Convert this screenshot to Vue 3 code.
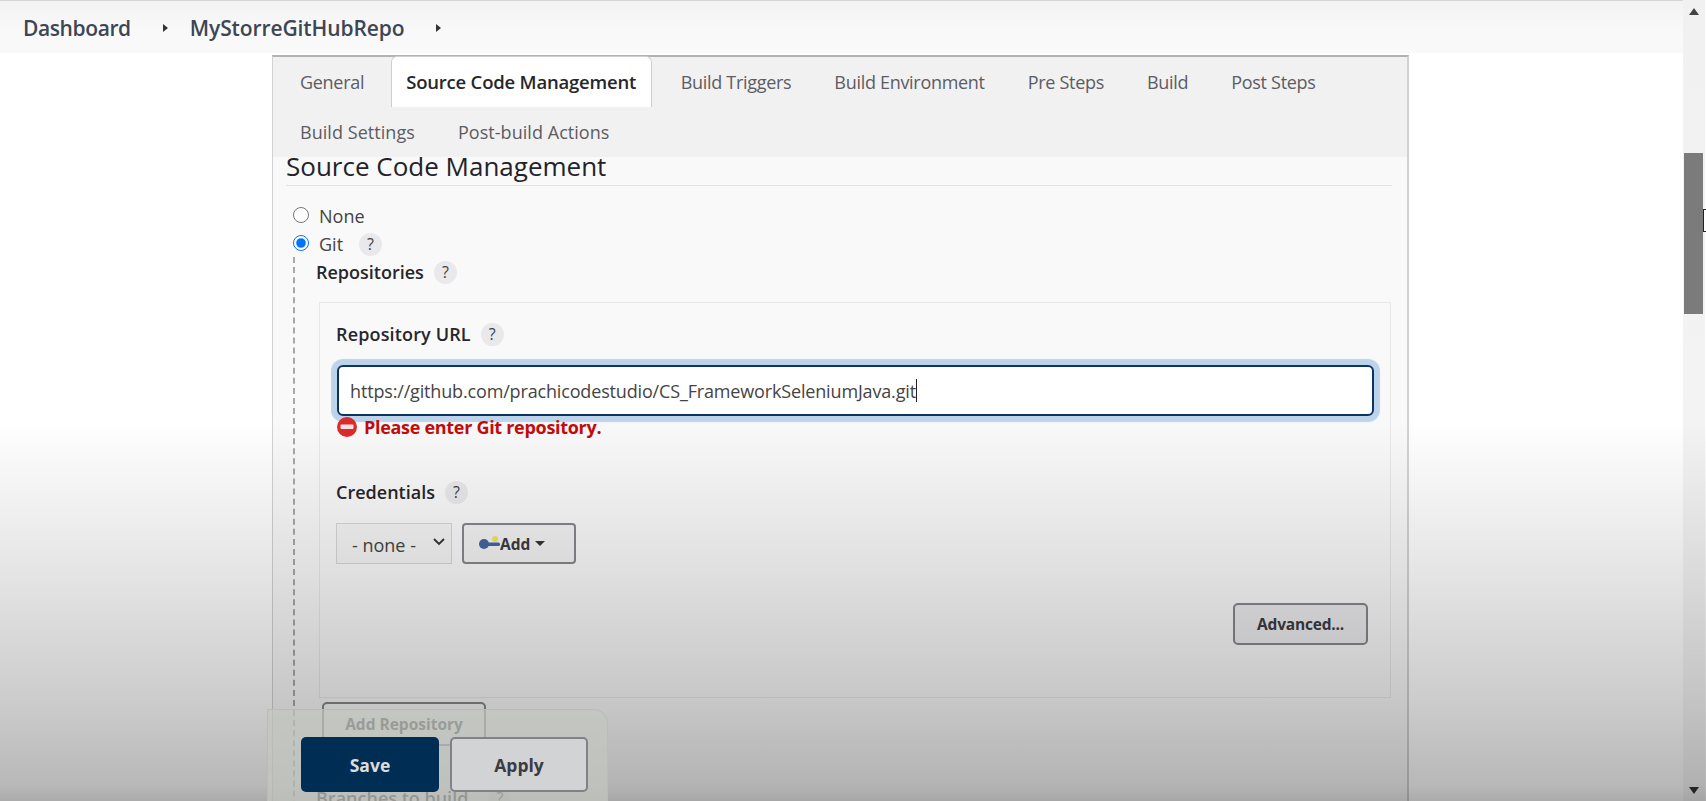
<template>
  <div class="screen">
    <div class="page">
      <header class="crumbs">
        <span class="crumb first">Dashboard</span>
        <span class="arrow"></span>
        <span class="crumb second">MyStorreGitHubRepo</span>
        <span class="arrow"></span>
      </header>

      <div class="panel">
        <nav class="tabs">
          <span
            v-for="tab in tabs"
            :key="tab"
            class="tab"
            :class="{ active: tab === 'Source Code Management' }"
          >{{ tab }}</span>
        </nav>

        <section class="content">
          <h2 class="heading">Source Code Management</h2>

          <label class="radio-row">
            <input type="radio" name="scm" />
            <span>None</span>
          </label>
          <label class="radio-row">
            <input type="radio" name="scm" checked />
            <span>Git</span>
            <span class="help git-help">?</span>
          </label>

          <div class="git-block">
            <div class="label-row repos">
              <b>Repositories</b>
              <span class="help">?</span>
            </div>

            <div class="repo-box">
              <div class="label-row url-label">
                <b>Repository URL</b>
                <span class="help">?</span>
              </div>
              <div class="url-input">
                <span>https://github.com/prachicodestudio/CS_FrameworkSeleniumJava.git</span><i class="caret"></i>
              </div>
              <div class="error">
                <svg width="20" height="20" viewBox="0 0 20 20">
                  <circle cx="10" cy="10" r="10" fill="#dc2b2b" />
                  <rect x="3.5" y="7.5" width="13" height="4.5" rx="1" fill="#f6e4e4" />
                </svg>
                <span>Please enter Git repository.</span>
              </div>

              <div class="label-row cred-label">
                <b>Credentials</b>
                <span class="help">?</span>
              </div>
              <div class="cred-row">
                <div class="select">
                  <span>- none -</span>
                  <svg width="14" height="9" viewBox="0 0 14 9">
                    <path d="M2 2l5 5 5-5" fill="none" stroke="#333" stroke-width="1.8" />
                  </svg>
                </div>
                <button class="btn add-btn">
                  <svg width="21" height="16" viewBox="0 0 21 16">
                    <circle cx="16" cy="3" r="3" fill="#f2e26a" />
                    <circle cx="5" cy="8" r="5" fill="#44659f" />
                    <rect x="6" y="6.5" width="15" height="3.4" rx="1.5" fill="#44659f" />
                  </svg>
                  <span>Add</span>
                  <i class="add-caret"></i>
                </button>
              </div>

              <div class="advanced-row">
                <button class="btn advanced">Advanced...</button>
              </div>
            </div>

            <button class="btn add-repo">Add Repository</button>
            <div class="label-row branches">
              <b>Branches to build</b>
              <span class="help">?</span>
            </div>
          </div>
        </section>
      </div>
    </div>

    <aside class="scrollbar">
      <i class="up"></i>
      <div class="thumb"></div>
      <i class="down"></i>
    </aside>

    <i class="cursor"></i>
    <div class="shade"></div>

    <div class="save-bar">
      <button class="btn save">Save</button>
      <button class="btn apply">Apply</button>
    </div>
  </div>
</template>

<script setup>
const tabs = [
  'General',
  'Source Code Management',
  'Build Triggers',
  'Build Environment',
  'Pre Steps',
  'Build',
  'Post Steps',
  'Build Settings',
  'Post-build Actions'
]
</script>

<style>
html,
body {
  margin: 0;
  overflow: hidden;
  background: #fff;
}
</style>

<style scoped>
.screen {
  position: relative;
  display: flex;
  width: 1706px;
  height: 801px;
  overflow: hidden;
  font-family: "Open Sans", "Liberation Sans", sans-serif;
  color: #333;
}

.page {
  flex: 1;
  min-width: 0;
}

.crumbs {
  display: flex;
  align-items: center;
  height: 51px;
  padding: 1px 0 0 23px;
  border-top: 1px solid #d4d4d4;
  background: linear-gradient(#f3f3f3, #f9f9f9 60%);
  color: #3d4654;
  font-size: 21px;
  font-weight: 600;
  letter-spacing: -0.1px;
}

.first {
  letter-spacing: -0.4px;
}

.arrow {
  width: 0;
  height: 0;
  margin: 0 0 0 32px;
  border-left: 5px solid #333;
  border-top: 4.5px solid transparent;
  border-bottom: 4.5px solid transparent;
}

.second {
  margin-left: 22px;
}

.panel {
  width: 1137px;
  margin: 2px 0 0 272px;
  box-sizing: border-box;
  border-top: 2px solid #b2b2b2;
  border-left: 1px solid #d2d2d2;
  border-right: 2px solid #d2d2d2;
  background: #f9f9f9;
}

.tabs {
  display: flex;
  flex-wrap: wrap;
  height: 100px;
  padding-left: 12.5px;
  background: #f1f1f2;
  font-size: 18px;
  color: #5c5c62;
}

.tab {
  height: 50px;
  padding: 0 14.5px;
  line-height: 50px;
  letter-spacing: -0.3px;
  white-space: nowrap;
  box-sizing: border-box;
  margin-right: 14px;
}

.tab:nth-child(n + 8) {
  line-height: 51px;
  letter-spacing: 0.05px;
}

.tab.active {
  margin: -1px 14px 0 -1.5px;
  height: 51px;
  padding: 0 15px 0 14px;
  background: #fff;
  border: 1px solid #cfcfcf;
  border-bottom: 0;
  border-radius: 6px 6px 0 0;
  color: #26262c;
  font-size: 18.5px;
  font-weight: 600;
  letter-spacing: -0.2px;
}

.content {
  padding: 0 15px 0 13px;
  font-size: 18px;
}

.heading {
  height: 28px;
  margin: 0 0 16px;
  border-bottom: 1px solid #e2e2e2;
  line-height: 18px;
  font-size: 26px;
  font-weight: 400;
  color: #22232a;
  box-sizing: content-box;
}

.radio-row {
  display: flex;
  align-items: center;
  height: 28px;
  padding-left: 7px;
  color: #444;
}

.radio-row input {
  width: 16px;
  height: 16px;
  margin: -2px 10px 0 0;
}

.help {
  display: inline-flex;
  align-items: center;
  justify-content: center;
  width: 23px;
  height: 23px;
  border-radius: 50%;
  background: #e9e9ec;
  color: #3f3f46;
  font-size: 16px;
}

.git-help {
  margin-left: 16px;
}

.git-block {
  margin: -1px 0 0 7px;
  padding-left: 21px;
  border-left: 2px dashed #a8a8a8;
  height: 600px;
}

.label-row {
  display: flex;
  align-items: center;
  gap: 10px;
  height: 30px;
  color: #26262c;
}

.label-row b {
  font-weight: 600;
}

.url-label b {
  letter-spacing: 0.15px;
}

.repo-box {
  margin: 15px 1px 0 3px;
  padding: 16px 15px 52px 16px;
  border: 1px solid #e8e8e8;
  height: 396px;
  box-sizing: border-box;
}

.url-input {
  display: flex;
  align-items: center;
  height: 51px;
  margin: 16px 0 0 1px;
  padding-left: 11px;
  width: 1037px;
  box-sizing: border-box;
  border: 2.5px solid #0c3461;
  border-radius: 6px;
  background: #fff;
  box-shadow: 0 0 1px 6px #bcd3ea;
  color: #444;
  font-size: 18px;
  letter-spacing: -0.16px;
}

.caret {
  width: 1px;
  height: 23px;
  background: #222;
}

.error {
  display: flex;
  align-items: center;
  gap: 7px;
  height: 26px;
  margin: -2px 0 0 1px;
  color: #c40b0b;
  font-size: 18px;
  font-weight: 700;
  letter-spacing: -0.3px;
}

.cred-label {
  height: 28px;
  margin-top: 38px;
}

.cred-row {
  display: flex;
  gap: 10px;
  margin-top: 17px;
}

.select {
  display: flex;
  align-items: center;
  justify-content: space-between;
  width: 116px;
  height: 41px;
  padding: 2px 5px 0 15px;
  box-sizing: border-box;
  border: 1px solid #d6d6d6;
  background: #f4f4f4;
  color: #444;
  font-size: 18px;
}

.select svg {
  margin-top: -7px;
}

.btn {
  font-family: inherit;
  font-weight: 700;
  color: #3b3b42;
  cursor: pointer;
  box-sizing: border-box;
}

.add-btn {
  display: flex;
  align-items: center;
  width: 114px;
  height: 41px;
  padding: 0 0 0 15px;
  border: 2px solid #85878c;
  border-radius: 4px;
  background: #f2f2f3;
  font-size: 15.5px;
}

.add-caret {
  width: 0;
  height: 0;
  margin-left: 5px;
  border-top: 5px solid #333;
  border-left: 5px solid transparent;
  border-right: 5px solid transparent;
}

.advanced-row {
  display: flex;
  justify-content: flex-end;
  margin: 39px 7px 0 0;
}

.advanced {
  width: 135px;
  height: 42px;
  border: 2px solid #85878c;
  border-radius: 5px;
  background: #ececee;
  font-size: 15.5px;
  letter-spacing: -0.2px;
}

.add-repo {
  display: block;
  width: 164px;
  height: 44px;
  margin: 4px 0 0 6px;
  border: 2px solid #85878c;
  border-radius: 5px;
  background: transparent;
  font-size: 15.5px;
}

.branches {
  margin-top: 37px;
  gap: 20px;
}

.scrollbar {
  position: relative;
  display: flex;
  flex-direction: column;
  align-items: center;
  width: 22px;
  margin-right: 1px;
  background: linear-gradient(#f1f1f1, #f5f5f5);
}

.up {
  margin-top: 8px;
  border-bottom: 7px solid #444;
  border-left: 5px solid transparent;
  border-right: 5px solid transparent;
}

.thumb {
  width: 19px;
  height: 161px;
  margin: 138px 2px 0 0;
  background: #7b7b7b;
}

.down {
  margin-top: auto;
  margin-bottom: 7px;
  border-top: 7px solid #333;
  border-left: 5px solid transparent;
  border-right: 5px solid transparent;
}

.cursor {
  position: absolute;
  left: 1703px;
  top: 209px;
  width: 2px;
  height: 21px;
  border: 1px solid #222;
  border-right: 0;
  background: #fff;
}

.shade {
  position: absolute;
  inset: 0;
  pointer-events: none;
  background: linear-gradient(
    rgba(0, 0, 0, 0) 420px,
    rgba(0, 0, 0, 0.1) 570px,
    rgba(0, 0, 0, 0.2) 700px,
    rgba(0, 0, 0, 0.28) 785px,
    rgba(0, 0, 0, 0.33) 801px
  );
}

.save-bar {
  position: absolute;
  left: 267px;
  top: 709px;
  display: flex;
  gap: 11px;
  width: 341px;
  height: 110px;
  padding: 27px 0 0 33px;
  box-sizing: border-box;
  border: 1px solid #b9bcb7;
  border-radius: 0 14px 0 0;
  background: rgba(194, 198, 191, 0.72);
}

.save,
.apply {
  height: 55px;
  font-size: 17.5px;
  border-radius: 5px;
}

.save {
  width: 138px;
  border: 0;
  background: #002d54;
  color: #dcdcdc;
}

.apply {
  width: 138px;
  border: 2px solid #7f8288;
  background: #d2d3d5;
}
</style>
